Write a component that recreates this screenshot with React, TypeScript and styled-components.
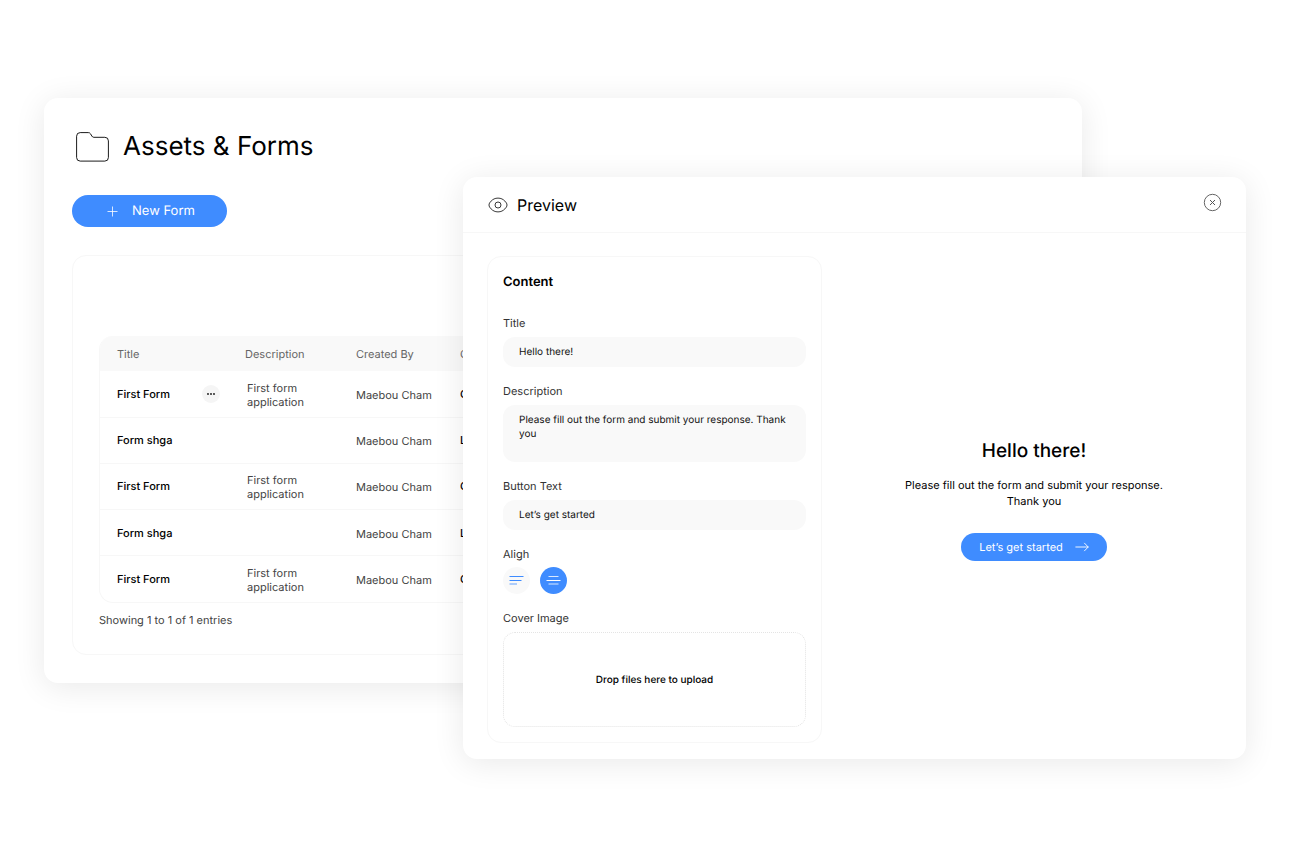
import React, { useState } from "react";
import styled, { createGlobalStyle } from "styled-components";

const blue = "#3f8cff";
const line = "#f7f7f7";
const panelShadow = "0 4px 32px rgba(0, 0, 0, 0.09)";

const GlobalStyle = createGlobalStyle`
  * { box-sizing: border-box; }
  body {
    margin: 0;
    background: #fff;
    color: #000;
    font-family: Inter, "Liberation Sans", sans-serif;
    text-rendering: geometricPrecision;
  }
  h1, h2, p { margin: 0; font-weight: 400; }
  button, input, textarea {
    border: 0;
    padding: 0;
    font-family: inherit;
    text-rendering: inherit;
  }
`;

const Stage = styled.main`
  position: relative;
  min-height: 100vh;
  padding: 98px 208px 98px 44px;
`;

const AssetsPanel = styled.section`
  padding: 28px;
  border-radius: 14px;
  background: #fff;
  box-shadow: ${panelShadow};
`;

const PageTitle = styled.header`
  display: flex;
  align-items: center;
  gap: 14px;
  height: 42px;
  padding-left: 4px;
  margin-bottom: 27px;

  h1 { font-size: 26px; line-height: 42px; }
`;

const PillButton = styled.button<{ $large?: boolean }>`
  display: inline-flex;
  align-items: center;
  justify-content: center;
  gap: ${(p) => (p.$large ? 14 : 12)}px;
  height: ${(p) => (p.$large ? 32 : 28)}px;
  padding: ${(p) => (p.$large ? "0 32px 0 35px" : "0 18px")};
  border-radius: 16px;
  background: ${blue};
  color: #fff;
  font-size: ${(p) => (p.$large ? 13 : 11)}px;
  cursor: pointer;
`;

const TableCard = styled.div`
  margin-top: 28px;
  padding: 80px 26px 27px;
  border: 1px solid ${line};
  border-radius: 14px;
`;

const TableFrame = styled.div`
  overflow: hidden;
  border: 1px solid ${line};
  border-top: 0;
  border-radius: 14px;
`;

const FormsTable = styled.table`
  width: 100%;
  height: 266px;
  table-layout: fixed;
  border-collapse: collapse;
  font-size: 11px;
  line-height: 14px;
  text-align: left;

  th, td { padding: 0; }
  th:first-child, td:first-child { padding-left: 17px; }
  th { height: 35px; background: #f9f9f9; color: #666; font-weight: 400; }
  td { height: 46px; color: #444; }
  tbody tr + tr td { border-top: 1px solid ${line}; }
`;

const TitleCell = styled.div`
  display: flex;
  align-items: center;
  justify-content: space-between;
  padding-right: 25px;
  color: #000;
  font-weight: 500;
`;

const DescriptionText = styled.div`
  padding: 2px 20px 0 2px;
`;

const AuthorText = styled.div`
  padding-top: 2px;
`;

const StatusText = styled.span`
  color: #000;
  font-weight: 500;
`;

const MoreButton = styled.button`
  display: grid;
  place-items: center;
  width: 18px;
  height: 18px;
  border-radius: 50%;
  background: #f5f5f5;
  cursor: pointer;
`;

const EntryCount = styled.p`
  margin-top: 10px;
  color: #444;
  font-size: 11px;
  line-height: 14px;
`;

const PreviewPanel = styled.section`
  position: absolute;
  top: 177px;
  left: 463px;
  right: 44px;
  border-radius: 14px;
  background: #fff;
  box-shadow: ${panelShadow};
`;

const PreviewHeader = styled.header`
  display: flex;
  align-items: flex-start;
  justify-content: space-between;
  padding: 16px 24px 15px 25px;
  border-bottom: 1px solid ${line};
`;

const PreviewTitle = styled.div`
  display: flex;
  align-items: center;
  gap: 9px;

  h2 { font-size: 16px; line-height: 24px; }
`;

const CloseButton = styled.button`
  display: grid;
  width: 19px;
  height: 19px;
  background: none;
  cursor: pointer;
`;

const PreviewBody = styled.div`
  display: grid;
  grid-template-columns: 335px 1fr;
  padding: 23px 0 16px 24px;
`;

const ContentForm = styled.form`
  display: flex;
  flex-direction: column;
  gap: 17px;
  padding: 16px 15px 15px;
  border: 1px solid ${line};
  border-radius: 14px;

  h2 {
    margin-bottom: 8px;
    font-size: 13px;
    line-height: 18px;
    font-weight: 600;
  }
`;

const Field = styled.div<{ $tight?: boolean }>`
  display: flex;
  flex-direction: column;
  gap: ${(p) => (p.$tight ? 6 : 7)}px;
`;

const FieldLabel = styled.label`
  color: #333;
  font-size: 11px;
  line-height: 14px;
`;

const TextInput = styled.input`
  height: 30px;
  padding: 0 16px;
  border-radius: 12px;
  background: #f9f9f9;
  color: #111;
  font-size: 10px;
`;

const TextArea = styled.textarea`
  height: 57px;
  padding: 8px 16px;
  border-radius: 12px;
  background: #f9f9f9;
  color: #111;
  font-size: 10px;
  line-height: 14px;
  resize: none;
`;

const AlignGroup = styled.div`
  display: flex;
  gap: 10px;
`;

const AlignButton = styled.button<{ $active: boolean }>`
  display: grid;
  place-items: center;
  width: 27px;
  height: 27px;
  border-radius: 50%;
  background: ${(p) => (p.$active ? blue : "#f9f9f9")};
  color: ${(p) => (p.$active ? "#fff" : blue)};
  cursor: pointer;
`;

const DropZone = styled.label`
  display: grid;
  place-items: center;
  height: 95px;
  border: 1px dotted #e4e4e4;
  border-radius: 12px;
  font-size: 10px;
  font-weight: 500;
  cursor: pointer;
`;

const FileInput = styled.input`
  position: absolute;
  width: 1px;
  height: 1px;
  opacity: 0;
`;

const Welcome = styled.div`
  display: flex;
  flex-direction: column;
  align-items: center;
  justify-content: center;
  text-align: center;

  h2 { font-size: 19px; line-height: 24px; font-weight: 500; }
  p { max-width: 280px; margin: 14px 0 24px; font-size: 11px; line-height: 16px; }
`;

const FolderIcon = () => (
  <svg width="33" height="30" viewBox="0 0 33 30" fill="none" stroke="#000" aria-hidden="true">
    <path d="M.6 4.2A3.6 3.6 0 0 1 4.2.6h8.100c1 0 1.700.4 2.200 1.200l1.400 2.300c.5.8 1 1.200 1.900 1.200h11a3.600 3.600 0 0 1 3.600 3.600v16.600a3.600 3.600 0 0 1-3.600 3.600H4.200a3.600 3.600 0 0 1-3.600-3.600z" strokeWidth=".9" />
  </svg>
);

const PlusIcon = () => (
  <svg width="11" height="11" viewBox="0 0 11 11" stroke="#fff" aria-hidden="true">
    <path d="M5.5.5v10M.5 5.5h10" strokeWidth=".8" />
  </svg>
);

const DotsIcon = () => (
  <svg width="8" height="2" viewBox="0 0 8 2" fill="#111" aria-hidden="true">
    <circle cx="1" cy="1" r=".9" />
    <circle cx="4" cy="1" r=".9" />
    <circle cx="7" cy="1" r=".9" />
  </svg>
);

const EyeIcon = () => (
  <svg width="20" height="16" viewBox="0 0 20 16" fill="none" stroke="#222" aria-hidden="true">
    <path d="M1 8c0-1.500 1-2.700 2.100-3.900C4.800 2.300 7 1.100 10 1.100s5.200 1.200 6.900 3C18 5.300 19 6.500 19 8s-1 2.700-2.100 3.900c-1.700 1.800-3.900 3-6.900 3s-5.200-1.200-6.900-3C2 10.700 1 9.500 1 8z" strokeWidth=".9" />
    <circle cx="10" cy="8" r="3" strokeWidth=".9" />
  </svg>
);

const CloseIcon = () => (
  <svg width="19" height="19" viewBox="0 0 19 19" fill="none" stroke="#555" aria-hidden="true">
    <circle cx="9.500" cy="9.500" r="8.200" strokeWidth=".9" />
    <path d="m7 7 5 5m0-5-5 5" />
  </svg>
);

const ArrowIcon = () => (
  <svg width="14" height="10" viewBox="0 0 14 10" fill="none" stroke="#fff" strokeLinecap="round" strokeLinejoin="round" aria-hidden="true">
    <path d="M.8 5h12.400M9.500 1.200 13.200 5 9.500 8.800" strokeWidth=".9" />
  </svg>
);

const AlignIcon = ({ centered }: { centered?: boolean }) => (
  <svg width="15" height="11" viewBox="0 0 15 11" fill="none" stroke="currentColor" aria-hidden="true">
    {centered ? (
      <>
        <path d="M2.500 1.500h10" opacity=".8" />
        <path d="M.5 5.500h14" />
        <path d="M2.500 9h10" opacity=".4" strokeWidth="2" />
      </>
    ) : (
      <>
        <path d="M.5 1.500h14M.5 5.500h12" />
        <path d="M.5 9H8" opacity=".4" strokeWidth="2" />
      </>
    )}
  </svg>
);

const forms = [
  { title: "First Form", description: "First form application", author: "Maebou Cham", status: "Open", menu: true },
  { title: "Form shga", description: "", author: "Maebou Cham", status: "Live" },
  { title: "First Form", description: "First form application", author: "Maebou Cham", status: "Open" },
  { title: "Form shga", description: "", author: "Maebou Cham", status: "Live" },
  { title: "First Form", description: "First form application", author: "Maebou Cham", status: "Open" },
];

export default function App() {
  const [title, setTitle] = useState("Hello there!");
  const [description, setDescription] = useState(
    "Please fill out the form and submit your response. Thank you"
  );
  const [buttonText, setButtonText] = useState("Let’s get started");
  const [align, setAlign] = useState<"left" | "center">("center");

  return (
    <>
      <GlobalStyle />
      <Stage>
        <AssetsPanel>
          <PageTitle>
            <FolderIcon />
            <h1>Assets &amp; Forms</h1>
          </PageTitle>
          <PillButton $large type="button">
            <PlusIcon />
            New Form
          </PillButton>
          <TableCard>
            <TableFrame>
              <FormsTable>
                <colgroup>
                  <col width="145" />
                  <col width="111" />
                  <col width="104" />
                  <col />
                </colgroup>
                <thead>
                  <tr>
                    <th>Title</th>
                    <th>Description</th>
                    <th>Created By</th>
                    <th>Current</th>
                  </tr>
                </thead>
                <tbody>
                  {forms.map((form, index) => (
                    <tr key={index}>
                      <td>
                        <TitleCell>
                          {form.title}
                          {form.menu && (
                            <MoreButton type="button" aria-label="More actions">
                              <DotsIcon />
                            </MoreButton>
                          )}
                        </TitleCell>
                      </td>
                      <td>
                        <DescriptionText>{form.description}</DescriptionText>
                      </td>
                      <td>
                        <AuthorText>{form.author}</AuthorText>
                      </td>
                      <td>
                        <StatusText>{form.status}</StatusText>
                      </td>
                    </tr>
                  ))}
                </tbody>
              </FormsTable>
            </TableFrame>
            <EntryCount>Showing 1 to 1 of 1 entries</EntryCount>
          </TableCard>
        </AssetsPanel>

        <PreviewPanel>
          <PreviewHeader>
            <PreviewTitle>
              <EyeIcon />
              <h2>Preview</h2>
            </PreviewTitle>
            <CloseButton type="button" aria-label="Close preview">
              <CloseIcon />
            </CloseButton>
          </PreviewHeader>
          <PreviewBody>
            <ContentForm>
              <h2>Content</h2>
              <Field>
                <FieldLabel htmlFor="title">Title</FieldLabel>
                <TextInput id="title" value={title} onChange={(e) => setTitle(e.target.value)} />
              </Field>
              <Field>
                <FieldLabel htmlFor="description">Description</FieldLabel>
                <TextArea
                  id="description"
                  value={description}
                  onChange={(e) => setDescription(e.target.value)}
                />
              </Field>
              <Field>
                <FieldLabel htmlFor="button-text">Button Text</FieldLabel>
                <TextInput
                  id="button-text"
                  value={buttonText}
                  onChange={(e) => setButtonText(e.target.value)}
                />
              </Field>
              <Field $tight role="group" aria-labelledby="align-label">
                <FieldLabel as="span" id="align-label">Aligh</FieldLabel>
                <AlignGroup>
                  <AlignButton
                    type="button"
                    aria-label="Left"
                    aria-pressed={align === "left"}
                    $active={align === "left"}
                    onClick={() => setAlign("left")}
                  >
                    <AlignIcon />
                  </AlignButton>
                  <AlignButton
                    type="button"
                    aria-label="Center"
                    aria-pressed={align === "center"}
                    $active={align === "center"}
                    onClick={() => setAlign("center")}
                  >
                    <AlignIcon centered />
                  </AlignButton>
                </AlignGroup>
              </Field>
              <Field>
                <FieldLabel htmlFor="cover">Cover Image</FieldLabel>
                <DropZone>
                  Drop files here to upload
                  <FileInput id="cover" type="file" />
                </DropZone>
              </Field>
            </ContentForm>
            <Welcome>
              <h2>{title}</h2>
              <p>{description}</p>
              <PillButton type="button">
                {buttonText}
                <ArrowIcon />
              </PillButton>
            </Welcome>
          </PreviewBody>
        </PreviewPanel>
      </Stage>
    </>
  );
}
